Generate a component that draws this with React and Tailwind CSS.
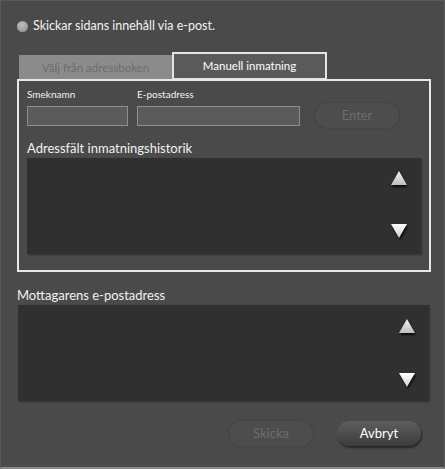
import React from "react";

const font = { fontFamily: "Lato, 'Open Sans', sans-serif" };

function Arrow({ down }) {
  return (
    <svg width="18" height="16" viewBox="0 0 18 16" className="drop-shadow-[1px_2px_1px_rgba(0,0,0,0.8)]">
      <defs>
        <linearGradient id={down ? "gd" : "gu"} x1="0" y1="0" x2="0" y2="1">
          <stop offset="0" stopColor={down ? "#ffffff" : "#f4f4f4"} />
          <stop offset="1" stopColor={down ? "#cfcfcf" : "#bdbdbd"} />
        </linearGradient>
      </defs>
      {down ? (
        <polygon points="1,1 17,1 9,15" fill="url(#gd)" />
      ) : (
        <polygon points="9,1 17,15 1,15" fill="url(#gu)" />
      )}
    </svg>
  );
}

function ListBox({ className }) {
  return (
    <div className={"flex justify-end bg-[#303030] shadow-[1px_1px_2px_rgba(0,0,0,0.35)] " + className}>
      <div className="flex flex-col justify-between">
        <Arrow />
        <Arrow down />
      </div>
    </div>
  );
}

export default function App() {
  return (
    <div
      style={font}
      className="w-[445px] h-[469px] bg-[#4a4a4a] border-x border-[#5a5a5a] border-t border-t-[#5a5a5a] border-b-2 border-b-[#8a8a8a] flex flex-col text-[#f2f2f2]"
    >
      {/* radio row */}
      <div className="flex items-center gap-[5px] ml-[16px] mt-[17px] h-[16px]">
        <span className="w-[11px] h-[11px] rounded-full bg-[radial-gradient(circle_at_40%_35%,#bdbdbd,#8c8c8c)]" />
        <span className="text-[12.5px] leading-none">Skickar sidans innehåll via e-post.</span>
      </div>

      {/* tabs */}
      <div className="flex items-end ml-[18px] mt-[19px] h-[27px]">
        <div className="w-[153px] h-[25px] bg-[#8b8b8b] flex items-center justify-center text-[11.5px] text-[#6c6c6c]">
          Välj från adressboken
        </div>
        <div className="w-[155px] h-[28px] bg-[#5a5a5a] border-2 border-[#e4e4e4] flex items-center justify-center text-[11.5px] text-white">
          Manuell inmatning
        </div>
      </div>

      {/* panel */}
      <div className="ml-[16px] w-[414px] h-[193px] border-2 border-[#e8e8e8] -mt-[1px] px-[8px] pt-[8px] flex flex-col">
        <div className="flex items-end">
          <div className="flex flex-col w-[110px]">
            <span className="text-[10px] leading-none">Smeknamn</span>
            <div className="mt-[7px] w-[101px] h-[20px] bg-[#5b5b5b] border border-[#8e8e8e]" />
          </div>
          <div className="flex flex-col w-[178px]">
            <span className="text-[10px] leading-none">E-postadress</span>
            <div className="mt-[7px] w-[163px] h-[20px] bg-[#5b5b5b] border border-[#8e8e8e]" />
          </div>
          <button className="w-[84px] h-[25px] -mb-[2px] rounded-full bg-[#4d4d4d] shadow-[0_0_2px_rgba(0,0,0,0.25)] text-[13px] text-[#6c6c6c]">
            Enter
          </button>
        </div>
        <span className="mt-[16px] text-[13px] leading-none">Adressfält inmatningshistorik</span>
        <ListBox className="mt-[3px] w-[394px] h-[96px] pt-[12px] pb-[15px] pr-[13px]" />
      </div>

      <span className="ml-[16px] mt-[17px] text-[13px] leading-none">Mottagarens e-postadress</span>
      <ListBox className="ml-[17px] mt-[3px] w-[411px] h-[96px] pt-[13px] pb-[13px] pr-[13px]" />

      <div className="flex justify-end gap-[24px] mr-[23px] mt-[20px]">
        <button className="w-[84px] h-[25px] rounded-full bg-[#4d4d4d] shadow-[0_0_2px_rgba(0,0,0,0.25)] text-[13px] text-[#6c6c6c]">
          Skicka
        </button>
        <button className="w-[84px] h-[25px] rounded-full bg-[linear-gradient(#5e5e5e,#3c3c3c)] shadow-[1px_2px_2px_rgba(0,0,0,0.5)] text-[13px] text-white">
          Avbryt
        </button>
      </div>
    </div>
  );
}
